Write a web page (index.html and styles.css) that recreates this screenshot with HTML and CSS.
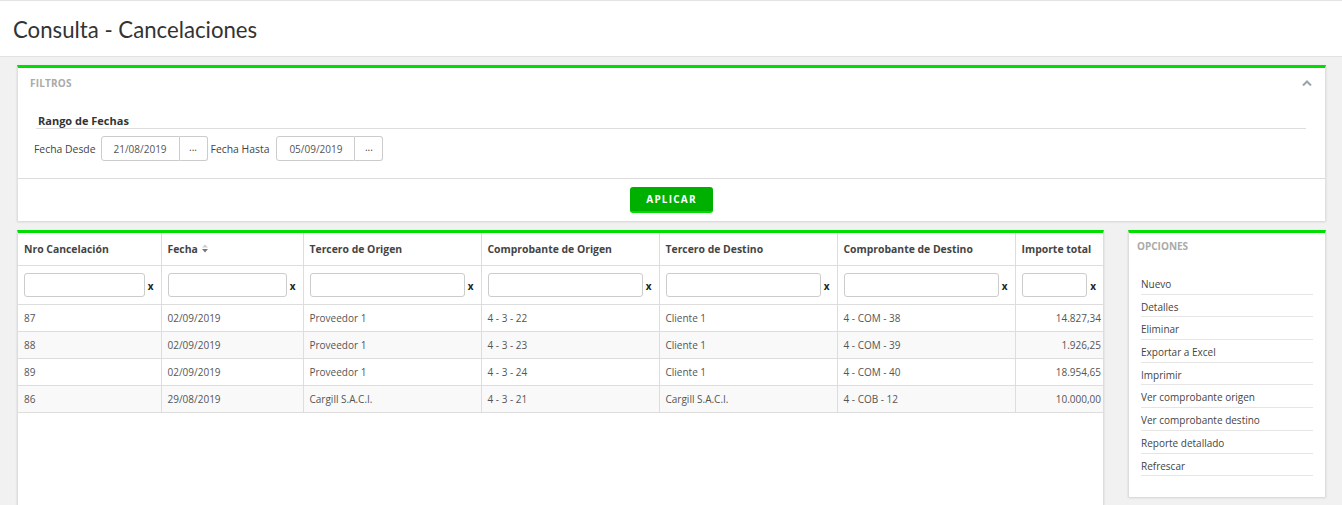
FILE: index.html
```html
<!DOCTYPE html>
<html lang="es">
<head>
<meta charset="utf-8">
<title>Consulta - Cancelaciones</title>
<link rel="stylesheet" href="styles.css">
</head>
<body>
<header class="page-header">
  <h1 class="page-title">Consulta - Cancelaciones</h1>
</header>
<main class="content">
  <section class="panel filters">
    <div class="panel-heading">
      <span class="panel-title">FILTROS</span>
      <svg class="chevron" width="10" height="6" viewBox="0 0 10 6"><path d="M1 5.5 L5 1.5 L9 5.5" fill="none" stroke="#9aa3ad" stroke-width="2"/></svg>
    </div>
    <div class="filters-body">
      <div class="legend">Rango de Fechas</div>
      <div class="date-row">
        <label class="date-label">Fecha Desde</label>
        <div class="date-group"><span class="date-input">21/08/2019</span><span class="date-btn">...</span></div>
        <label class="date-label">Fecha Hasta</label>
        <div class="date-group"><span class="date-input">05/09/2019</span><span class="date-btn">...</span></div>
      </div>
    </div>
    <div class="filters-footer">
      <button class="btn-apply">APLICAR</button>
    </div>
  </section>

  <div class="lower">
    <section class="panel grid-panel">
      <table class="grid">
        <colgroup>
          <col style="width:143px"><col style="width:142px"><col style="width:178px"><col style="width:178px"><col style="width:178px"><col style="width:178px"><col>
        </colgroup>
        <thead>
          <tr class="head-row">
            <th>Nro Cancelación</th>
            <th>Fecha <svg class="sort" width="6" height="9" viewBox="0 0 6 9"><path d="M0 3.5 L3 0.5 L6 3.5 Z" fill="#ccc"/><path d="M0 5 L6 5 L3 8.5 Z" fill="#777"/></svg></th>
            <th>Tercero de Origen</th>
            <th>Comprobante de Origen</th>
            <th>Tercero de Destino</th>
            <th>Comprobante de Destino</th>
            <th>Importe total</th>
          </tr>
          <tr class="filter-row">
            <td><div class="fcell"><span class="finput"></span><span class="fx">x</span></div></td>
            <td><div class="fcell"><span class="finput"></span><span class="fx">x</span></div></td>
            <td><div class="fcell"><span class="finput"></span><span class="fx">x</span></div></td>
            <td><div class="fcell"><span class="finput"></span><span class="fx">x</span></div></td>
            <td><div class="fcell"><span class="finput"></span><span class="fx">x</span></div></td>
            <td><div class="fcell"><span class="finput"></span><span class="fx">x</span></div></td>
            <td><div class="fcell"><span class="finput"></span><span class="fx">x</span></div></td>
          </tr>
        </thead>
        <tbody>
          <tr><td>87</td><td>02/09/2019</td><td>Proveedor 1</td><td>4 - 3 - 22</td><td>Cliente 1</td><td>4 - COM - 38</td><td class="num">14.827,34</td></tr>
          <tr><td>88</td><td>02/09/2019</td><td>Proveedor 1</td><td>4 - 3 - 23</td><td>Cliente 1</td><td>4 - COM - 39</td><td class="num">1.926,25</td></tr>
          <tr><td>89</td><td>02/09/2019</td><td>Proveedor 1</td><td>4 - 3 - 24</td><td>Cliente 1</td><td>4 - COM - 40</td><td class="num">18.954,65</td></tr>
          <tr><td>86</td><td>29/08/2019</td><td>Cargill S.A.C.I.</td><td>4 - 3 - 21</td><td>Cargill S.A.C.I.</td><td>4 - COB - 12</td><td class="num">10.000,00</td></tr>
        </tbody>
      </table>
    </section>

    <aside class="panel options">
      <div class="options-title">OPCIONES</div>
      <ul class="options-list">
        <li>Nuevo</li>
        <li>Detalles</li>
        <li>Eliminar</li>
        <li>Exportar a Excel</li>
        <li>Imprimir</li>
        <li>Ver comprobante origen</li>
        <li>Ver comprobante destino</li>
        <li>Reporte detallado</li>
        <li>Refrescar</li>
      </ul>
    </aside>
  </div>
</main>
</body>
</html>
```

FILE: styles.css
```css
* { box-sizing: border-box; }
html, body { margin: 0; padding: 0; }
body {
  background: #f1f1f1;
  font-family: "Open Sans", "Liberation Sans", sans-serif;
  color: #333;
  font-size: 10px;
  height: 505px;
  overflow: hidden;
}
.page-header {
  background: #fff;
  height: 57px;
  border-top: 1px solid #e3e3e3;
  border-bottom: 1px solid #e2e2e2;
  display: flex;
  align-items: center;
  padding-left: 13px;
}
.page-title {
  margin: 0;
  font-family: Lato, "Open Sans", sans-serif;
  font-weight: 400;
  font-size: 22.2px;
  color: #333;
  position: relative;
  top: 1px;
}
.content {
  padding: 8px 16px 0 17px;
}
.panel {
  background: #fff;
  border-top: 3px solid #00dd00;
  border-left: 1px solid #e0e0e0;
  border-right: 1px solid #e0e0e0;
  box-shadow: 0 1px 2px rgba(0,0,0,0.12);
}
.panel-heading {
  height: 30px;
  display: flex;
  align-items: center;
  justify-content: space-between;
  padding: 0 13px 0 12px;
}
.panel-title {
  font-weight: 700;
  font-size: 10px;
  color: #aaa;
  letter-spacing: 0.2px;
}
.filters-body {
  padding: 15px 19px 17px 16px;
}
.legend {
  font-weight: 700;
  font-size: 11px;
  color: #333;
  padding: 0 0 0 2px;
  border-bottom: 1px solid #ddd;
  margin-left: 2px;
  line-height: 15px;
}
.date-row {
  display: flex;
  align-items: center;
  margin-top: 7px;
  height: 25px;
}
.date-label {
  font-size: 10.4px;
  color: #444;
  margin-right: 5px;
}
.date-label + .date-group + .date-label { margin-right: 7px; }
.date-group {
  display: flex;
  height: 25px;
  margin-right: 3px;
}
.date-input {
  width: 79px;
  border: 1px solid #ccc;
  border-radius: 3px 0 0 3px;
  display: flex;
  align-items: center;
  justify-content: center;
  color: #555;
  font-size: 10px;
}
.date-btn {
  width: 28px;
  border: 1px solid #ccc;
  border-left: none;
  border-radius: 0 3px 3px 0;
  display: flex;
  align-items: center;
  justify-content: center;
  color: #444;
  font-size: 10px;
  padding-bottom: 3px;
}
.filters-footer {
  border-top: 1px solid #ddd;
  display: flex;
  justify-content: center;
  padding: 8px 0 8px;
}
.btn-apply {
  width: 83px;
  height: 26px;
  background: #00b000;
  border: none;
  border-bottom: 2px solid #00dd00;
  border-radius: 3px;
  color: #fff;
  font-family: "Open Sans", sans-serif;
  font-weight: 700;
  font-size: 10px;
  letter-spacing: 1.2px;
  padding: 0;
}
.lower {
  display: flex;
  gap: 24px;
  margin-top: 9px;
  align-items: flex-start;
}
.grid-panel {
  flex: 1;
  height: 275px;
  border-left: 1px solid #ddd;
  border-right: 1px solid #ddd;
}
.grid {
  width: 100%;
  border-collapse: collapse;
  table-layout: fixed;
}
.grid th, .grid td {
  border-right: 1px solid #ddd;
  border-bottom: 1px solid #ddd;
  text-align: left;
  padding: 0 6px;
  white-space: nowrap;
  overflow: hidden;
}
.grid th:last-child, .grid td:last-child { border-right: none; }
.head-row th {
  height: 32px;
  font-weight: 700;
  font-size: 10.4px;
  color: #444;
  padding-top: 0;
}
.sort { vertical-align: 0px; margin-left: 1px; }
.filter-row td { height: 39px; padding-right: 7px; }
.fcell {
  display: flex;
  align-items: center;
}
.finput {
  flex: 1;
  height: 24px;
  border: 1px solid #ccc;
  border-radius: 3px;
  background: #fff;
}
.fx {
  width: 9px;
  text-align: right;
  font-weight: 700;
  font-size: 10px;
  color: #222;
  padding-top: 2px;
}
.grid tbody td {
  height: 27px;
  font-size: 10px;
  color: #555;
}
.grid tbody tr:nth-child(even) td { background: #f9f9f9; }
.grid td.num { text-align: right; padding-right: 2px; }
.options {
  width: 198px;
  padding: 6px 12px 21px 12px;
  border-left: 1px solid #ddd;
  border-right: 1px solid #ddd;
}
.options-title {
  font-weight: 700;
  font-size: 10px;
  color: #aaa;
  margin-left: -4px;
  line-height: 14px;
}
.options-list {
  list-style: none;
  margin: 19px 0 0;
  padding: 0;
}
.options-list li {
  font-size: 10px;
  color: #444;
  border-bottom: 1px solid #e5e5e5;
  height: 22.7px;
  line-height: 22px;
  padding-top: 1px;
}
```
